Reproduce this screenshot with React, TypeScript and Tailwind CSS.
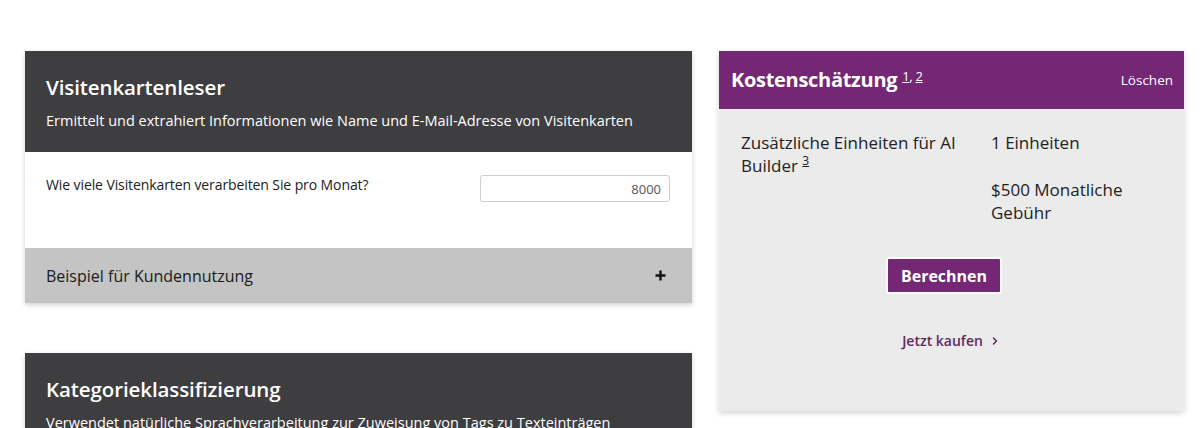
import { ChevronRight } from 'lucide-react';

const font = { fontFamily: '"Open Sans", "Liberation Sans", sans-serif' };

function ProductCard({ title, text, open }: { title: string; text: string; open?: boolean }) {
  return (
    <div className="shadow-[0_2px_5px_rgba(0,0,0,0.18)]">
      {/* Header */}
      <div className="bg-[#3e3d40] h-[101px] px-[21px] pt-[22px] text-white">
        <h2 className="text-[20.5px] leading-[28px] font-semibold tracking-[-0.1px]">{title}</h2>
        <p className="mt-[10px] text-[14.5px] leading-[20px]">{text}</p>
      </div>
      {open && (
        <>
          <div className="bg-white h-[96px] pl-[21px] pr-[22px] pt-[23px] flex items-start justify-between">
            <label className="text-[14px] leading-[20px] text-[#222] tracking-[-0.1px]">
              Wie viele Visitenkarten verarbeiten Sie pro Monat?
            </label>
            <input
              readOnly
              value="8000"
              className="w-[190px] h-[27px] rounded-[3px] border border-[#cfcfcf] bg-white px-[8px] text-right text-[13px] text-[#555] outline-none"
            />
          </div>
          <div className="bg-[#c4c4c4] h-[55px] pl-[21px] pr-[26px] flex items-center justify-between">
            <span className="text-[16px] text-[#1a1a1a] font-medium">Beispiel für Kundennutzung</span>
            <svg width="11" height="11" viewBox="0 0 11 11">
              <path d="M5.5 0.5v10M0.5 5.5h10" stroke="#111" strokeWidth="2.4" />
            </svg>
          </div>
        </>
      )}
    </div>
  );
}

export default function App() {
  return (
    <div style={font} className="bg-white min-h-screen pt-[51px] pl-[25px] flex items-start gap-[27px]">
      {/* Left column */}
      <div className="w-[667px] flex flex-col gap-[50px]">
        <ProductCard
          title="Visitenkartenleser"
          text="Ermittelt und extrahiert Informationen wie Name und E-Mail-Adresse von Visitenkarten"
          open
        />
        <ProductCard
          title="Kategorieklassifizierung"
          text="Verwendet natürliche Sprachverarbeitung zur Zuweisung von Tags zu Texteinträgen"
        />
      </div>

      {/* Estimate */}
      <div className="w-[465px] shadow-[0_2px_6px_rgba(0,0,0,0.18)]">
        <div className="bg-[#742774] h-[58px] pl-[12px] pr-[11px] flex items-center justify-between text-white">
          <h2 className="text-[20px] font-bold tracking-[-0.3px]">
            Kostenschätzung{' '}
            <sup className="text-[13px] font-normal underline">1</sup>
            <sup className="text-[13px] font-normal">, </sup>
            <sup className="text-[13px] font-normal underline">2</sup>
          </h2>
          <button className="text-[13.5px]">Löschen</button>
        </div>
        <div className="bg-[#ebebeb] h-[302px] pt-[22px]">
          <div className="grid grid-cols-[250px_175px] pl-[22px] text-[17px] leading-[23px] text-[#222]">
            <div className="pr-[12px]">
              Zusätzliche Einheiten für AI Builder{' '}
              <span className="relative -top-[7px] text-[12px] leading-none underline">3</span>
            </div>
            <div>
              <p>1 Einheiten</p>
              <p className="mt-[24px]">$500 Monatliche Gebühr</p>
            </div>
          </div>
          <div className="flex justify-center pr-[15px] mt-[33px]">
            <button className="bg-[#742774] text-white text-[16px] font-bold w-[116px] h-[37px] rounded-[3px] border-2 border-white">
              Berechnen
            </button>
          </div>
          <div className="flex justify-center mt-[36px]">
            <a className="flex items-center gap-[6px] text-[14px] font-semibold text-[#5e2a5e]">
              Jetzt kaufen
              <ChevronRight size={12} strokeWidth={3} />
            </a>
          </div>
        </div>
      </div>
    </div>
  );
}
